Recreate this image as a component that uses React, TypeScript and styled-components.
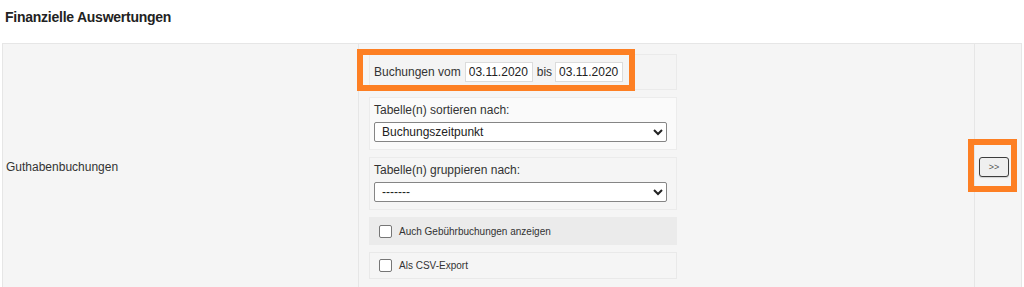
import styled, { createGlobalStyle } from 'styled-components'

const GlobalStyle = createGlobalStyle`
  body {
    margin: 0;
    background: #ffffff;
    font-family: 'Liberation Sans', Arial, sans-serif;
    color: #333333;
  }
`

const sortOptions = ['Buchungszeitpunkt', 'Betrag', 'Kunde']
const groupOptions = ['-------', 'Kunde', 'Tag']

const App = () => {
  return (
    <Page>
      <GlobalStyle />
      <Title>Finanzielle Auswertungen</Title>

      <Row>
        <LabelCell>Guthabenbuchungen</LabelCell>

        <OptionsCell>
          <DateBox>
            <Inline>Buchungen vom</Inline>
            <DateInput defaultValue="03.11.2020" />
            <Inline $gap={3}>bis</Inline>
            <DateInput defaultValue="03.11.2020" />
          </DateBox>

          <FieldBox $bg="#fafafa" $border="#ececec">
            <FieldLabel>Tabelle(n) sortieren nach:</FieldLabel>
            <Select defaultValue={sortOptions[0]}>
              {sortOptions.map((o) => (
                <option key={o}>{o}</option>
              ))}
            </Select>
          </FieldBox>

          <FieldBox $bg="#f5f5f5" $border="#ebebeb">
            <FieldLabel>Tabelle(n) gruppieren nach:</FieldLabel>
            <Select defaultValue={groupOptions[0]}>
              {groupOptions.map((o) => (
                <option key={o}>{o}</option>
              ))}
            </Select>
          </FieldBox>

          <CheckBox $bg="#ebebeb" $border="#ebebeb" $height={28}>
            <Check type="checkbox" />
            <CheckLabel>Auch Gebührbuchungen anzeigen</CheckLabel>
          </CheckBox>

          <CheckBox $bg="#f5f5f5" $border="#e9e9e9" $height={27}>
            <Check type="checkbox" />
            <CheckLabel>Als CSV-Export</CheckLabel>
          </CheckBox>
        </OptionsCell>

        <ActionCell>
          <GoButton>&gt;&gt;</GoButton>
        </ActionCell>

        <Highlight $left={354} $top={5} $width={278} $height={42} />
        <Highlight $left={965} $top={95} $width={49} $height={53} />
      </Row>
    </Page>
  )
}

export default App

const Page = styled.div`
  width: 1024px;
`
const Title = styled.h1`
  margin: 0;
  padding: 9px 0 0 5px;
  height: 43px;
  box-sizing: border-box;
  font-size: 14px;
  line-height: 16px;
  letter-spacing: -0.25px;
  font-weight: bold;
  color: #222222;
`
const Row = styled.div`
  position: relative;
  margin: 0 2px;
  display: grid;
  grid-template-columns: 355px 616px 1fr;
  border: 1px solid #e6e6e6;
  background: #f5f5f5;
`
const LabelCell = styled.div`
  display: flex;
  align-items: center;
  padding: 0 3px;
  font-size: 12px;
  color: #333333;
`
const OptionsCell = styled.div`
  display: flex;
  flex-direction: column;
  gap: 7px;
  padding: 10px 0 10px 10px;
  border-left: 1px solid #e6e6e6;
`
const Box = styled.div<{ $bg?: string; $border?: string }>`
  width: 308px;
  box-sizing: border-box;
  background: ${({ $bg }) => $bg || '#f4f4f4'};
  border: 1px solid ${({ $border }) => $border || '#eaeaea'};
`
const DateBox = styled(Box)`
  display: flex;
  align-items: center;
  padding: 7px 4px;
  font-size: 12px;
  color: #333333;
`
const Inline = styled.span<{ $gap?: number }>`
  margin-right: ${({ $gap }) => $gap ?? 4}px;
  white-space: nowrap;
`
const DateInput = styled.input`
  width: 68px;
  height: 20px;
  box-sizing: border-box;
  margin-right: 4px;
  padding: 1px 3px;
  border: 1px solid #dcdcdc;
  background: #ffffff;
  font-family: 'Liberation Sans', Arial, sans-serif;
  font-size: 12px;
  color: #222222;
  outline: none;
`
const FieldBox = styled(Box)`
  padding: 5px 4px 7px;
`
const FieldLabel = styled.div`
  font-size: 12px;
  line-height: 14px;
  color: #333333;
  margin-bottom: 5px;
`
const Select = styled.select`
  display: block;
  width: 293px;
  height: 20px;
  box-sizing: border-box;
  padding: 0 3px;
  border: 1px solid #858585;
  border-radius: 2px;
  background: #ffffff;
  font-family: 'Liberation Sans', Arial, sans-serif;
  font-size: 12px;
  color: #222222;
`
const CheckBox = styled(Box)<{ $height: number }>`
  height: ${({ $height }) => $height}px;
  display: flex;
  align-items: center;
  padding-left: 9px;
`
const Check = styled.input`
  appearance: none;
  width: 13px;
  height: 13px;
  margin: 0 7px 0 0;
  border: 1px solid #767676;
  border-radius: 2px;
  background: #ffffff;
`
const CheckLabel = styled.span`
  font-size: 10px;
  color: #333333;
`
const ActionCell = styled.div`
  display: flex;
  align-items: center;
  padding-left: 4px;
  border-left: 1px solid #e6e6e6;
`
const GoButton = styled.button`
  width: 30px;
  height: 20px;
  padding: 0;
  border: 1px solid #3c3c3c;
  border-radius: 3px;
  background: #efefef;
  box-shadow: 0 1px 1px rgba(0, 0, 0, 0.15);
  font-family: 'Liberation Sans', Arial, sans-serif;
  font-size: 9px;
  color: #555555;
`
const Highlight = styled.div<{ $left: number; $top: number; $width: number; $height: number }>`
  position: absolute;
  left: ${({ $left }) => $left}px;
  top: ${({ $top }) => $top}px;
  width: ${({ $width }) => $width}px;
  height: ${({ $height }) => $height}px;
  box-sizing: border-box;
  border: 6px solid #fd7f23;
  pointer-events: none;
`
